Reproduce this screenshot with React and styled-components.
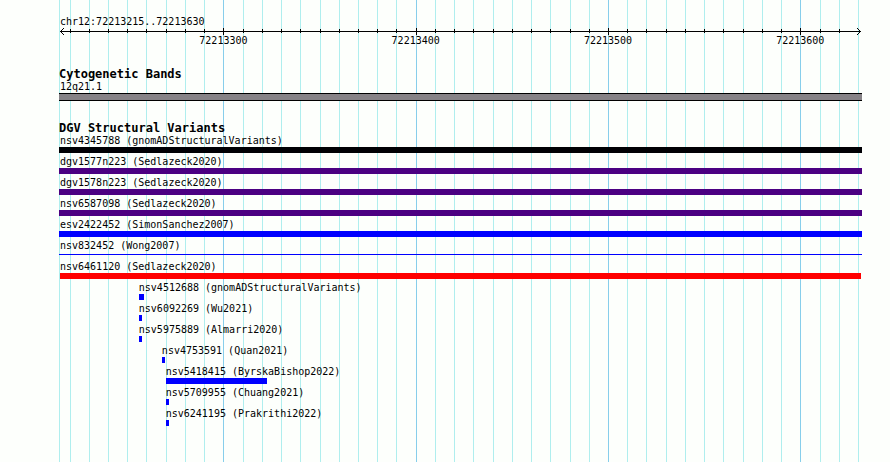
import React from 'react';
import styled, { createGlobalStyle } from 'styled-components';

const GlobalStyle = createGlobalStyle`
    * {
        box-sizing: border-box;
    }
    body {
        margin: 0;
        background: #fdfffc;
        color: #000;
        font: 10px/13px "DejaVu Sans Mono", "Liberation Mono", monospace;
    }
`

// visible window on the chromosome, in bases
const VIEW_START = 72213214.5
const VIEW_SPAN = 417.6

const toPercent = (base) => `${((base - VIEW_START) / VIEW_SPAN) * 100}%`

const ticks = Array.from({ length: 42 }, (_, i) => {
    const base = 72213220 + i * 10
    return { base, major: base % 100 === 0 }
})

const variants = [
    { id: "nsv4345788", study: "gnomADStructuralVariants", color: "#000004" },
    { id: "dgv1577n223", study: "Sedlazeck2020", color: "#4b0082" },
    { id: "dgv1578n223", study: "Sedlazeck2020", color: "#4b0082" },
    { id: "nsv6587098", study: "Sedlazeck2020", color: "#4b0082" },
    { id: "esv2422452", study: "SimonSanchez2007", color: "#0000ff" },
    { id: "nsv832452", study: "Wong2007", color: "#0000ff", thin: true },
    { id: "nsv6461120", study: "Sedlazeck2020", color: "#ff0000", inset: true },
    { id: "nsv4512688", study: "gnomADStructuralVariants", start: 72213256, end: 72213258 },
    { id: "nsv6092269", study: "Wu2021", start: 72213256, end: 72213256 },
    { id: "nsv5975889", study: "Almarri2020", start: 72213256, end: 72213256 },
    { id: "nsv4753591", study: "Quan2021", start: 72213268, end: 72213268 },
    { id: "nsv5418415", study: "ByrskaBishop2022", start: 72213270, end: 72213322 },
    { id: "nsv5709955", study: "Chuang2021", start: 72213270, end: 72213270 },
    { id: "nsv6241195", study: "Prakrithi2022", start: 72213270, end: 72213270 },
]

const Page = styled.main`
    min-height: 100vh;
    padding: 0 28px 0 59px;
`

const Panel = styled.div`
    position: relative;
    isolation: isolate;
    min-height: 100vh;
    padding: 15px 0 32px;
`

const GridLines = styled.div`
    position: absolute;
    inset: 0;
    z-index: -1;
`

const GridLine = styled.span`
    position: absolute;
    top: 0;
    bottom: 0;
    width: 1px;
    background: ${({ $major }) => ($major ? "#87ceeb" : "#afeeee")};
`

const Region = styled.h1`
    margin: 0;
    padding-left: 1px;
    font: inherit;
`

const Axis = styled.div`
    position: relative;
    height: 40px;
    margin: 0 0 0;
`

const AxisLine = styled.div`
    position: absolute;
    top: 3px;
    left: 1px;
    right: 1px;
    height: 1px;
    background: #000;
`

const ArrowHead = styled.svg`
    position: absolute;
    top: 0;
    ${({ $side }) => $side}: 1px;
    width: 4px;
    height: 7px;
    fill: #000;
    shape-rendering: crispEdges;
`

const Tick = styled.span`
    position: absolute;
    top: ${({ $major }) => ($major ? "0" : "1px")};
    width: 1px;
    height: ${({ $major }) => ($major ? "7px" : "4px")};
    background: #000;
`

const TickLabel = styled.span`
    position: absolute;
    top: 6px;
    transform: translateX(-50%);
`

const TrackTitle = styled.h2`
    margin: 0;
    font-size: 12px;
    line-height: 12px;
    white-space: nowrap;
`

const Track = styled.section`
    margin-bottom: 21px;
`

const Label = styled.div`
    padding-left: ${({ $indent }) => ($indent ? "1px" : "0")};
    white-space: nowrap;
`

const Band = styled.div`
    height: 8px;
    border: solid #000;
    border-width: 1px 0;
    background: #868286;
`

const VariantList = styled.ul`
    display: grid;
    row-gap: 2px;
    margin: 0;
    padding: 0;
    list-style: none;
`

const Bar = styled.div`
    height: ${({ $thin }) => ($thin ? "1px" : "6px")};
    margin: ${({ $thin, $inset }) => ($thin ? "2px 0 3px" : $inset ? "0 1px" : "0")};
    min-width: 3px;
    background: ${({ $color }) => $color};
`

function Ruler() {
    return (
        <Axis>
            <AxisLine />
            <ArrowHead $side="left" viewBox="0 0 4 7" aria-hidden="true">
                <path d="M3 0h1v1h-1zM2 1h1v1h-1zM1 2h1v1h-1zM0 3h1v1h-1zM1 4h1v1h-1zM2 5h1v1h-1zM3 6h1v1h-1z" />
            </ArrowHead>
            <ArrowHead $side="right" viewBox="0 0 4 7" aria-hidden="true">
                <path d="M0 0h1v1h-1zM1 1h1v1h-1zM2 2h1v1h-1zM3 3h1v1h-1zM2 4h1v1h-1zM1 5h1v1h-1zM0 6h1v1h-1z" />
            </ArrowHead>
            {ticks.slice(0, -1).map((tick) => (
                <Tick key={tick.base} $major={tick.major} style={{ left: toPercent(tick.base) }} />
            ))}
            {ticks.filter((tick) => tick.major).map((tick) => (
                <TickLabel key={tick.base} style={{ left: toPercent(tick.base) }}>{tick.base}</TickLabel>
            ))}
        </Axis>
    )
}

function Variant({ item }) {
    const placed = item.start !== undefined
    const left = placed ? toPercent(item.start) : undefined
    // the bar reaches to the middle of its last base
    const width = placed ? `${((item.end + 0.5 - item.start) / VIEW_SPAN) * 100}%` : undefined
    return (
        <li>
            <Label $indent={!placed} style={{ marginLeft: left }}>{item.id} ({item.study})</Label>
            <Bar
                $color={item.color || "#0000ff"}
                $thin={item.thin}
                $inset={item.inset}
                style={{ marginLeft: left, width }}
            />
        </li>
    )
}

function App() {
    return (
        <Page>
            <GlobalStyle />
            <Panel>
                <GridLines aria-hidden="true">
                    <GridLine style={{ left: 0 }} />
                    {ticks.map((tick) => (
                        <GridLine key={tick.base} $major={tick.major} style={{ left: toPercent(tick.base) }} />
                    ))}
                </GridLines>
                <Region>chr12:72213215..72213630</Region>
                <Ruler />
                <Track>
                    <TrackTitle>Cytogenetic Bands</TrackTitle>
                    <Label $indent>12q21.1</Label>
                    <Band />
                </Track>
                <Track>
                    <TrackTitle>DGV Structural Variants</TrackTitle>
                    <VariantList>
                        {variants.map((item) => (
                            <Variant key={item.id} item={item} />
                        ))}
                    </VariantList>
                </Track>
            </Panel>
        </Page>
    )
}

export default App;
